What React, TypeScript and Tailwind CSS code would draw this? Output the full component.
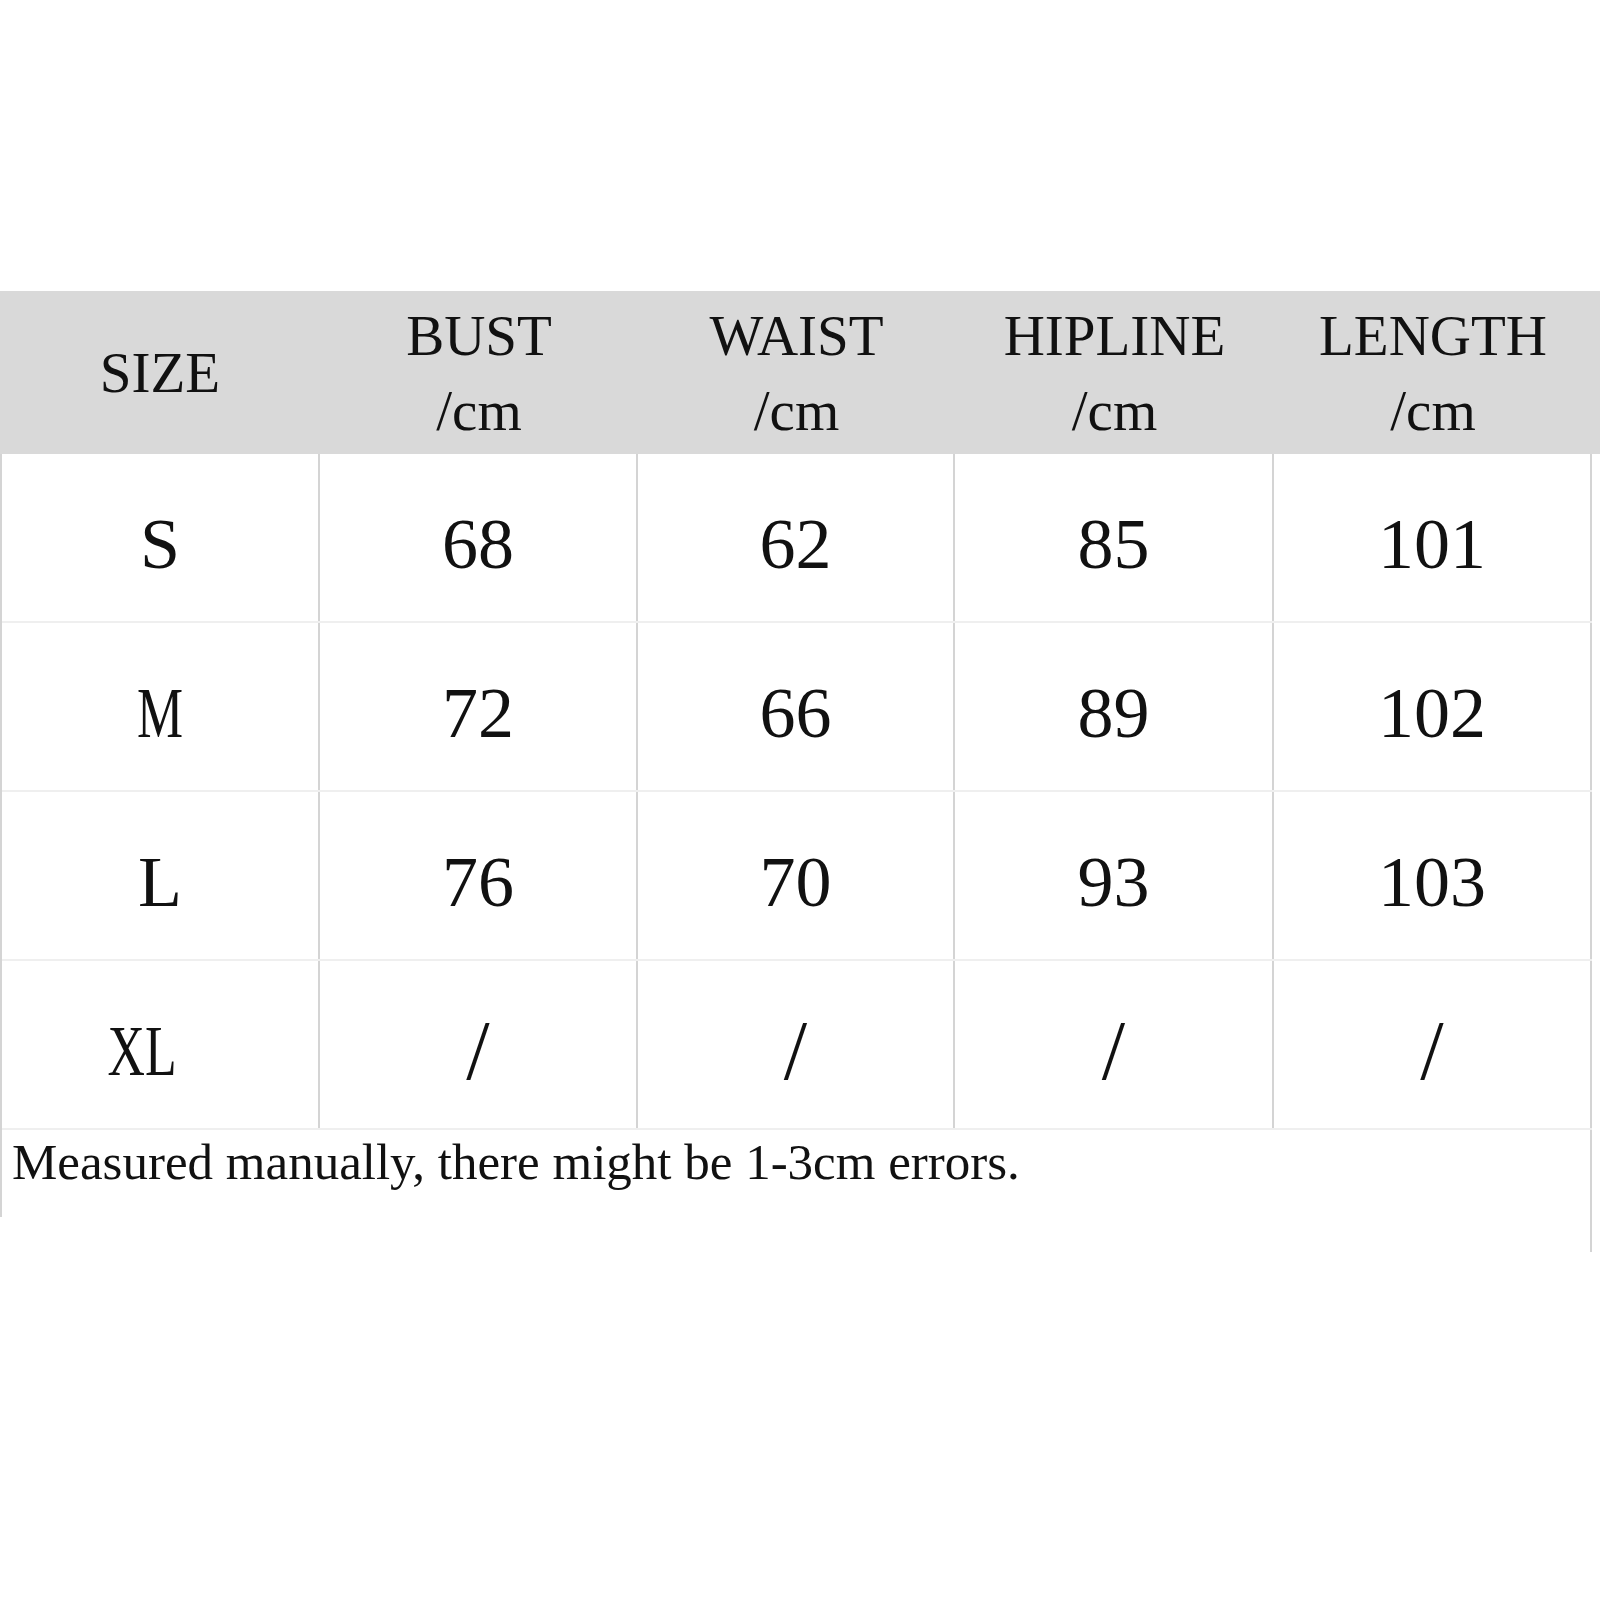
const headers: string[][] = [["SIZE"], ["BUST", "/cm"], ["WAIST", "/cm"], ["HIPLINE", "/cm"], ["LENGTH", "/cm"]];

const rows: string[][] = [
  ["S", "68", "62", "85", "101"],
  ["M", "72", "66", "89", "102"],
  ["L", "76", "70", "93", "103"],
  ["XL", "/", "/", "/", "/"],
];

const serif = { fontFamily: '"Liberation Serif", "Times New Roman", serif' };

function Cell({ v }: { v: string }) {
  // M and XL are set narrower in the original table font
  const narrow = v === "M" || v === "XL";
  return (
    <div
      className={`h-[167px] flex items-center justify-center border-r-2 border-[#d4d4d4] pt-[12px] ${
        v === "/" ? "text-[84px] font-light" : "text-[72px]"
      } ${v === "XL" ? "pr-[36px]" : ""}`}
    >
      <span className={narrow ? "inline-block scale-x-[0.72]" : ""}>{v}</span>
    </div>
  );
}

export default function App() {
  return (
    <div className="w-[1600px] h-[1600px] bg-white pt-[291px] text-[#111]" style={serif}>
      {/* header band */}
      <div className="w-[1600px] h-[163px] bg-[#d9d9d9] grid grid-cols-[320px_318px_317px_319px_318px]">
        {headers.map((h, i) => (
          <div key={i} className="flex flex-col items-center justify-center text-[57px] leading-[75px]">
            {h.map((line) => (
              <span key={line}>{line}</span>
            ))}
          </div>
        ))}
      </div>

      {/* body */}
      <div className="w-[1592px] border-l-2 border-[#d4d4d4]">
        {rows.map((r, ri) => (
          <div key={ri} className="grid grid-cols-[318px_318px_317px_319px_318px] border-b-2 border-[#efefef]">
            {r.map((v, ci) => (
              <Cell key={ci} v={v} />
            ))}
          </div>
        ))}
        <div className="h-[87px] border-r-2 border-[#d4d4d4] pl-[10px] pt-[2px] text-[51px] leading-[60px]">
          Measured manually, there might be 1-3cm errors.
        </div>
      </div>
      <div className="w-[1592px] h-[35px] border-r-2 border-[#d4d4d4]" />
    </div>
  );
}
